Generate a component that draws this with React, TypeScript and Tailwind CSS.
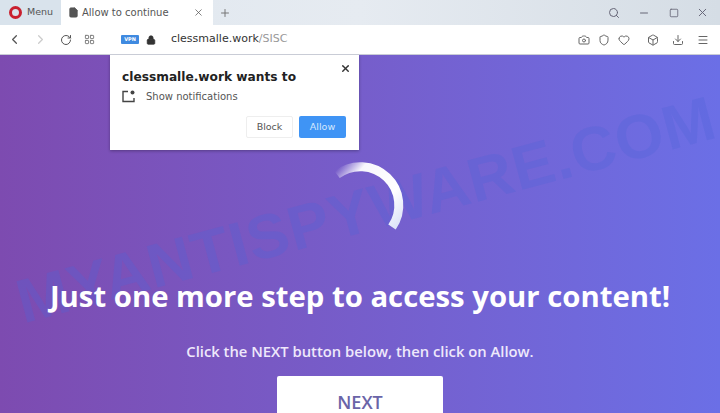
import { ChevronLeft, ChevronRight, RotateCw, LayoutGrid, Search, Minus, Square, X, Plus, Camera, Shield, Heart, Box, Download, Menu, FileText, Lock } from "lucide-react";

function Spinner() {
  return (
    <svg width="90" height="90" viewBox="0 0 90 90" fill="none">
      <defs>
        <linearGradient id="spin" x1="18" y1="16" x2="80" y2="70" gradientUnits="userSpaceOnUse">
          <stop offset="0" stopColor="#fff" stopOpacity="0" />
          <stop offset="0.22" stopColor="#fff" stopOpacity="0.95" />
          <stop offset="0.7" stopColor="#fff" />
          <stop offset="1" stopColor="#dfe4f8" />
        </linearGradient>
      </defs>
      <path d="M22 16.5 A38.5 38.5 0 0 1 77 69" stroke="url(#spin)" strokeWidth="9" />
    </svg>
  );
}

export default function App() {
  return (
    <div className="flex h-[413px] w-[720px] flex-col overflow-hidden bg-white font-['DejaVu_Sans',sans-serif]">
      {/* tab strip */}
      <div className="flex h-[25px] items-center bg-gradient-to-r from-[#dfe7ef] via-[#e6ebf1] to-[#d5dde5] text-[#555]">
        <div className="flex h-full w-[61px] items-center gap-[5px] bg-[#d9e3ec] pl-[9px] text-[9.5px]">
          <span className="h-[13px] w-[13px] rounded-full border-[3.5px] border-[#c9202f]" />
          <span>Menu</span>
        </div>
        <div className="flex h-full w-[152px] items-center bg-white pl-[7px] pr-[9px] text-[10px]">
          <FileText size={11} className="fill-[#555] text-[#555]" />
          <span className="ml-[3px] flex-1">Allow to continue</span>
          <X size={11} strokeWidth={1.6} />
        </div>
        <Plus size={12} className="ml-[6px] text-[#777]" />
        <div className="ml-auto flex items-center pr-[11px] text-[#667]">
          <Search size={12} strokeWidth={2} />
          <Minus size={12} className="ml-[18px]" />
          <Square size={10} strokeWidth={2} className="ml-[19px]" />
          <X size={13} strokeWidth={1.8} className="ml-[17px]" />
        </div>
      </div>
      {/* address bar */}
      <div className="relative flex h-[29px] items-center bg-white pl-[7px] pr-[11px] text-[#555]">
        <ChevronLeft size={15} />
        <ChevronRight size={15} className="ml-[11px] text-[#ccc]" />
        <RotateCw size={12} className="ml-[12px]" />
        <LayoutGrid size={11} className="ml-[12px] text-[#777]" />
        <span className="ml-[26px] flex h-[9px] w-[18px] items-center justify-center rounded-[1px] bg-[#3f8ae0] text-[5px] font-bold text-white">VPN</span>
        <Lock size={10} className="ml-[7px] fill-[#333] text-[#333]" />
        <span className="ml-[15px] text-[11px] font-medium text-[#333]">
          clessmalle.work<span className="font-normal text-[#999]">/SISC</span>
        </span>
        <div className="ml-auto flex items-center text-[#666]">
          <Camera size={12} />
          <Shield size={12} className="ml-[8px]" />
          <Heart size={12} className="ml-[8px]" />
          <Box size={12} className="ml-[17px]" />
          <Download size={12} className="ml-[13px]" />
          <Menu size={12} className="ml-[13px]" />
        </div>
      </div>
      <div className="h-px bg-[#c9ccd6]" />
      {/* page */}
      <div className="relative flex flex-1 flex-col items-center overflow-hidden bg-gradient-to-r from-[#7d4bb0] to-[#6b6fe6] pt-[103px]">
        <div className="absolute left-[-14px] top-[108px] w-[760px] -rotate-[15deg] whitespace-nowrap text-center font-['Liberation_Sans',sans-serif] text-[62px] font-bold tracking-[1px] text-[#4f62d8]/30">
          MYANTISPYWARE.COM
        </div>
        <div className="absolute left-[110px] top-0 w-[249px] bg-white px-[12px] pb-[12px] pt-[13px] shadow-[0_1px_3px_rgba(0,0,0,0.3)]">
          <X size={11} strokeWidth={3} className="absolute right-[8px] top-[8px] text-[#333]" />
          <div className="text-[12.2px] font-bold leading-[18px] text-[#222]">clessmalle.work wants to</div>
          <div className="mt-[3px] flex items-center gap-[11px] text-[10px] text-[#555]">
            <svg width="13" height="13" viewBox="0 0 13 13" fill="none" stroke="#444" strokeWidth="1.4">
              <path d="M6 1.5H1v10h11V8" />
              <circle cx="10.5" cy="2.5" r="2" fill="#444" stroke="none" />
            </svg>
            <span>Show notifications</span>
          </div>
          <div className="mt-[12px] flex justify-end gap-[6px] pr-px text-[9.5px]">
            <span className="flex h-[22px] w-[47px] items-center justify-center rounded-[2px] border border-[#eee] text-[#555]">Block</span>
            <span className="flex h-[22px] w-[47px] items-center justify-center rounded-[2px] bg-[#3f94f5] text-[#d5e8fd]">Allow</span>
          </div>
        </div>
        <div className="relative">
          <Spinner />
        </div>
        <h1 className="relative mt-[28px] whitespace-nowrap font-['Open_Sans',sans-serif] text-[29.3px] font-bold leading-[40px] text-white">
          Just one more step to access your content!
        </h1>
        <p className="relative mt-[25px] whitespace-nowrap font-['Open_Sans',sans-serif] text-[14.8px] font-semibold leading-[20px] text-[#eee8fb]">
          Click the NEXT button below, then click on Allow.
        </p>
        <div className="relative mt-[15px] flex h-[60px] w-[166px] shrink-0 justify-center rounded-[2px] bg-white pt-[13px] font-['Open_Sans',sans-serif] text-[18px] font-semibold text-[#6a64a8]">
          NEXT
        </div>
      </div>
    </div>
  );
}
